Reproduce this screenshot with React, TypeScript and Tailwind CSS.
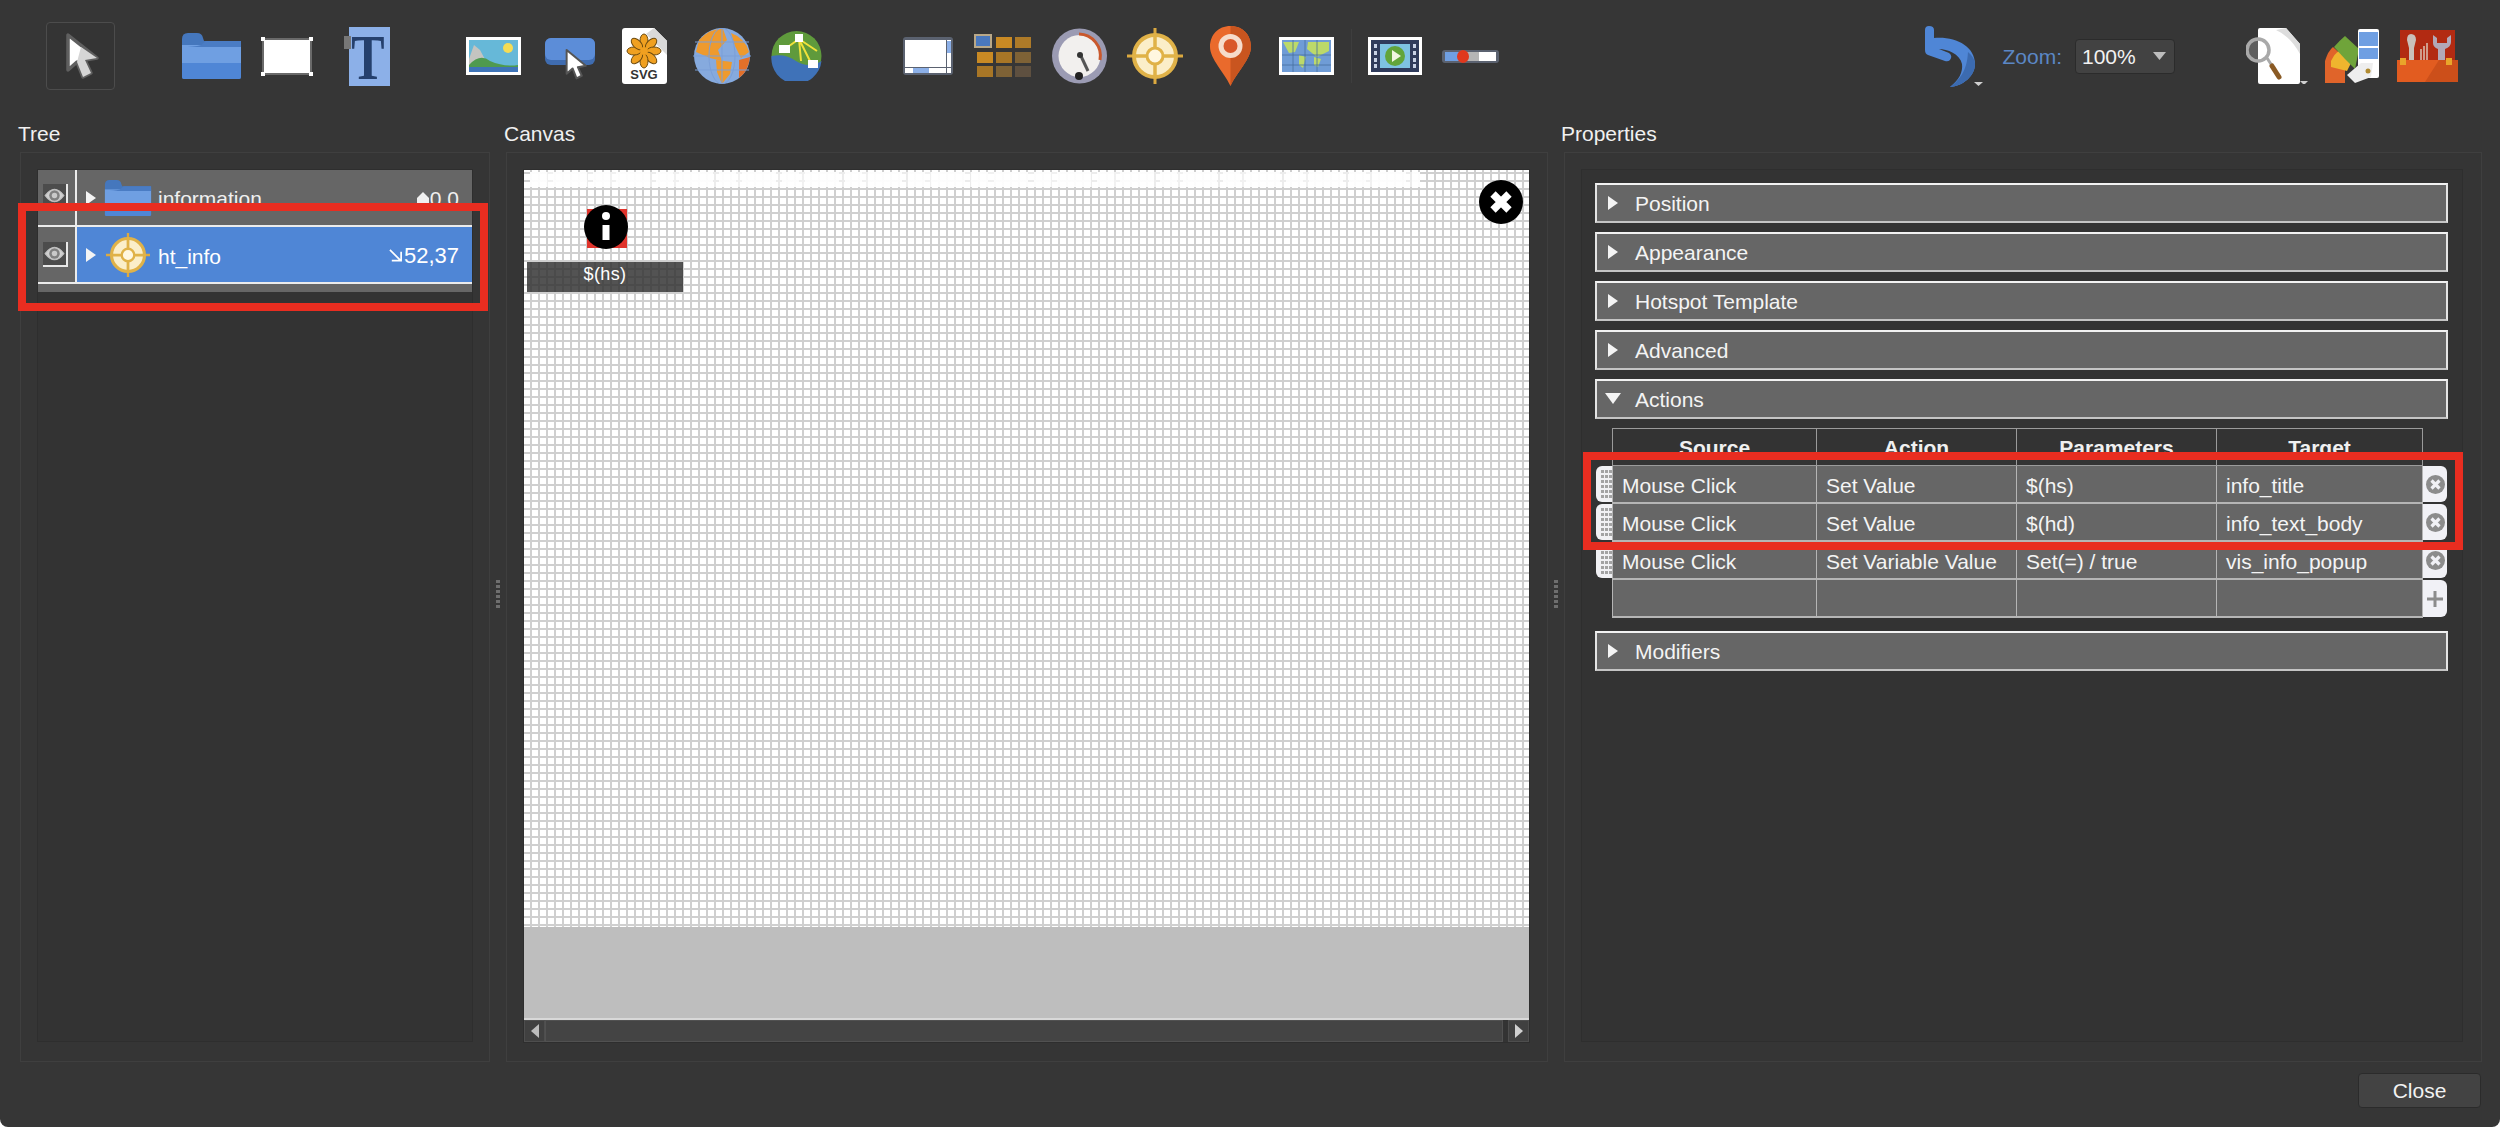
import React from "react";

const Cursor = ({ x = 0, y = 0, s = 1 }: { x?: number; y?: number; s?: number }) => (
  <g transform={`translate(${x} ${y}) scale(${s})`}>
    <path d="M21 12 L21 47 L30 39 L36 54 L44 50 L38 37 L50 35 Z" fill="#fff" stroke="#5f5f5f" strokeWidth="3.5" strokeLinejoin="round" />
    <path d="M34 24 L50 35 L38 37 L44 50 L36 54 L30 39 Z" fill="#d5d5d5" />
  </g>
);

const SelectIcon = () => (
  <svg width="67" height="66" viewBox="0 0 67 66"><Cursor /></svg>
);

const FolderIcon = ({ w = 59, h = 46 }: { w?: number; h?: number }) => (
  <svg width={w} height={h} viewBox="0 0 59 46">
    <path d="M0 6 Q0 0 6 0 L15 0 Q20 0 21 5 L22 8 L59 8 L59 44 Q59 46 57 46 L2 46 Q0 46 0 44 Z" fill="#4577bd" />
    <rect x="0" y="12" width="59" height="20" fill="#6f9fe2" />
    <path d="M0 14 Q12 14 19 12 L24 8 L59 8 L59 14 Z" fill="#4a7cc4" />
    <path d="M0 30 L59 30 L59 44 Q59 46 57 46 L2 46 Q0 46 0 44 Z" fill="#4f86d6" />
  </svg>
);

const RectIcon = () => (
  <svg width="52" height="39" viewBox="0 0 52 39">
    <rect x="2" y="2" width="48" height="35" fill="#fff" stroke="#6a6a6a" strokeWidth="2" rx="2" />
    {[[2, 2], [50, 2], [2, 37], [50, 37]].map(([x, y]) => (
      <rect key={`${x}-${y}`} x={x - 2} y={y - 2} width="4" height="4" fill="#fff" />
    ))}
  </svg>
);

const TextIcon = () => (
  <svg className="overflow-visible" width="46" height="59" viewBox="0 0 46 59">
    <rect x="5" y="0" width="41" height="59" fill="#8cb0e8" />
    <rect x="0" y="9" width="7" height="13" fill="#777" />
    <text transform="translate(24 52) scale(0.78 1)" textAnchor="middle" fontFamily="'Liberation Serif', serif" fontWeight="700" fontSize="64" fill="#25406d">T</text>
  </svg>
);

const ImageIcon = () => (
  <svg width="55" height="38" viewBox="0 0 55 38">
    <rect width="55" height="38" fill="#fff" />
    <rect x="3" y="3" width="49" height="32" fill="#66b8d8" />
    <circle cx="42" cy="11" r="5" fill="#f5dc55" />
    <path d="M3 22 L8 8 L14 13 L22 28 L3 30 Z" fill="#c4c4c0" />
    <path d="M3 28 Q14 16 24 24 Q38 30 52 28 L52 32 L3 32 Z" fill="#4f9a4f" />
    <rect x="3" y="30" width="49" height="5" fill="#3e74b8" />
  </svg>
);

const HoverIcon = () => (
  <svg width="50" height="42" viewBox="0 0 50 42">
    <rect x="0" y="0" width="50" height="27" rx="6" fill="#3f6cb0" />
    <rect x="0" y="0" width="50" height="22" rx="6" fill="#5c8dd8" />
    <g transform="translate(19 12) scale(0.66)"><path d="M4 0 L4 36 L13 28 L19 43 L27 39 L21 26 L33 24 Z" fill="#fff" stroke="#555" strokeWidth="3" strokeLinejoin="round" /></g>
  </svg>
);

const SvgIcon = () => (
  <svg width="45" height="56" viewBox="0 0 45 56">
    <path d="M3 0 L32 0 L45 13 L45 53 Q45 56 42 56 L3 56 Q0 56 0 53 L0 3 Q0 0 3 0 Z" fill="#fff" />
    <path d="M32 0 L45 13 L32 13 Z" fill="#c9c9c9" />
    <path d="M24 6 L45 27 L45 13 L32 0 Z" fill="#d9d9d9" />
    {[0, 45, 90, 135, 180, 225, 270, 315].map((a) => (
      <ellipse key={a} cx="22" cy="13" rx="4" ry="7" fill="#f0a020" stroke="#6b4a10" strokeWidth="1" transform={`rotate(${a} 22 23)`} />
    ))}
    <circle cx="22" cy="23" r="4" fill="#f0a020" />
    <text x="22" y="51" textAnchor="middle" fontFamily="'Liberation Sans', sans-serif" fontWeight="700" fontSize="13" fill="#333">SVG</text>
  </svg>
);

const GlobeIcon = () => (
  <svg width="58" height="56" viewBox="0 0 58 56">
    <circle cx="29" cy="28" r="28" fill="#86aade" />
    <path d="M6 12 Q17 0 30 1 L34 12 L25 22 L29 33 L17 30 L3 24 Z" fill="#ee9a2e" />
    <path d="M23 32 L39 34 L37 46 L29 56 L24 44 Z" fill="#ee9a2e" />
    <path d="M38 5 Q52 10 56 24 L48 30 L42 18 Z" fill="#ee9a2e" />
    <path d="M46 32 L57 29 Q55 44 46 50 Z" fill="#e2702a" />
    <g stroke="#7b9fd8" strokeWidth="1" fill="none">
      <path d="M2 14 H56 M0 28 H58 M2 42 H56" />
      <ellipse cx="29" cy="28" rx="13" ry="28" />
      <path d="M29 0 V56" />
    </g>
  </svg>
);

const NetIcon = () => (
  <svg width="51" height="50" viewBox="0 0 51 50">
    <circle cx="25.5" cy="25" r="25" fill="#5f9a3c" />
    <path d="M0.5 25 Q14 22 25 30 Q38 38 50.5 30 A25 25 0 0 1 0.5 25 Z" fill="#3f72b8" />
    <g stroke="#f0e23a" strokeWidth="2" fill="none"><path d="M14 18 L28 8 L40 32 M28 8 L30 30 M28 8 L46 20" /></g>
    <rect x="8" y="14" width="11" height="8" fill="#fff" />
    <rect x="24" y="3" width="8" height="8" fill="#fff" />
    <rect x="37" y="29" width="10" height="8" fill="#fff" />
  </svg>
);

const ContainerIcon = () => (
  <svg width="50" height="38" viewBox="0 0 50 38">
    <rect width="50" height="38" rx="3" fill="#5b6270" />
    <rect x="2" y="3" width="41" height="27" fill="#fff" />
    <rect x="44" y="3" width="4" height="27" fill="#fff" />
    <rect x="44" y="4" width="4" height="12" fill="#8cb0e8" />
    <rect x="2" y="31" width="41" height="5" fill="#fff" />
    <rect x="10" y="31" width="16" height="5" fill="#8cb0e8" />
    <rect x="44" y="31" width="4" height="5" fill="#fff" />
  </svg>
);

const GridIcon = () => (
  <svg width="58" height="44" viewBox="0 0 58 44">
    <rect x="1" y="1" width="16" height="12" fill="#4a78bd" stroke="#b9a888" strokeWidth="2" />
    <rect x="22" y="3" width="16" height="11" fill="#c98a24" />
    <rect x="41" y="3" width="16" height="11" fill="#ad7a28" />
    <rect x="3" y="18" width="16" height="11" fill="#c98a24" />
    <rect x="22" y="18" width="16" height="11" fill="#a87626" />
    <rect x="41" y="18" width="16" height="11" fill="#7e6236" />
    <rect x="3" y="32" width="16" height="11" fill="#a87626" />
    <rect x="22" y="32" width="16" height="11" fill="#7e6236" />
    <rect x="41" y="32" width="16" height="11" fill="#5e5040" />
  </svg>
);

const GaugeIcon = () => (
  <svg width="55" height="56" viewBox="0 0 55 56">
    <circle cx="27.5" cy="28" r="27.5" fill="#9b9bb3" />
    <circle cx="27.5" cy="28" r="21" fill="#f2f0ee" />
    <path d="M27 6 A22 22 0 0 1 48 32" fill="none" stroke="#c9582c" strokeWidth="3" />
    <path d="M28 26 L36 43" stroke="#555" strokeWidth="3" />
    <circle cx="28" cy="27" r="3" fill="#333" />
    <circle cx="27" cy="48" r="4" fill="#222" />
  </svg>
);

const CrossIcon = ({ w = 56, h = 56 }: { w?: number; h?: number }) => (
  <svg width={w} height={h} viewBox="0 0 56 56">
    <path d="M28 0 V56 M0 28 H56" stroke="#dca93f" strokeWidth="3" />
    <circle cx="28" cy="28" r="21" fill="#fbeec9" stroke="#e0b248" strokeWidth="4" />
    <path d="M28 7 V49 M7 28 H49" stroke="#e0b248" strokeWidth="3.5" />
    <circle cx="28" cy="28" r="8" fill="#fff7e0" stroke="#e0b248" strokeWidth="3" />
  </svg>
);

const PinIcon = () => (
  <svg width="41" height="60" viewBox="0 0 41 60">
    <path d="M20.5 0 C8 0 0 9 0 21 C0 33 14 46 20.5 60 C27 46 41 33 41 21 C41 9 33 0 20.5 0 Z" fill="#ea6a2c" />
    <path d="M20.5 0 C33 0 41 9 41 21 C41 33 27 46 20.5 60 Z" fill="#c9551f" />
    <circle cx="20.5" cy="20" r="12" fill="#f6dccb" />
    <circle cx="20.5" cy="20" r="7" fill="#d9582a" />
  </svg>
);

const MapIcon = () => (
  <svg width="55" height="38" viewBox="0 0 55 38">
    <rect width="55" height="38" fill="#fff" />
    <rect x="3" y="3" width="49" height="32" fill="#6f9cd6" />
    <path d="M4 5 L20 5 L16 15 L10 16 Z M29 5 L50 5 L50 14 L38 20 L28 12 Z M20 18 L27 20 L24 31 L20 28 Z M35 20 L42 22 L39 30 L35 28 Z" fill="#bcd96a" />
    <g stroke="#46709f" strokeWidth="0.8"><path d="M14 3 V35 M26 3 V35 M38 3 V35 M3 18 H52 M3 28 H52" /></g>
  </svg>
);

const VideoIcon = () => (
  <svg width="54" height="38" viewBox="0 0 54 38">
    <rect width="54" height="38" fill="#fff" />
    <rect x="3" y="3" width="48" height="32" fill="#2f3b5c" />
    <rect x="12" y="7" width="30" height="24" fill="#7ec3e2" />
    {[7, 14, 21, 27].map((y) => (
      <g key={y}>
        <rect x="6" y={y} width="3" height="4" fill="#c8d2e6" />
        <rect x="45" y={y} width="3" height="4" fill="#c8d2e6" />
      </g>
    ))}
    <circle cx="27" cy="19" r="10" fill="#62a53a" />
    <path d="M24 13 L33 19 L24 25 Z" fill="#f0f6e0" />
  </svg>
);

const SliderIcon = () => (
  <svg width="57" height="13" viewBox="0 0 57 13">
    <rect width="57" height="13" rx="3" fill="#5b6270" />
    <rect x="3" y="2" width="14" height="9" fill="#6f9fe2" />
    <rect x="17" y="2" width="20" height="9" fill="#b5b5b5" />
    <rect x="37" y="2" width="17" height="9" fill="#fff" />
    <ellipse cx="21" cy="6.5" rx="6" ry="6.5" fill="#e0381d" />
  </svg>
);

const UndoIcon = () => (
  <svg width="58" height="61" viewBox="0 0 58 61">
    <path d="M4 0 Q9 0 9 4 L9 12 C30 10 50 20 50 38 C50 50 38 60 25 61 C34 54 38 46 37 38 C35 28 22 23 14 23 L24 27 Q28 30 25 34 Q23 36 20 35 L3 29 Q0 28 0 24 L0 4 Q0 0 4 0 Z" fill="#4f86d6" />
    <path d="M50 38 C50 50 38 60 25 61 C34 54 42 46 43 26 Q50 32 50 38 Z" fill="#3c6bb0" />
    <path d="M49 56 L58 56 L53.5 60 Z" fill="#cfcfcf" />
  </svg>
);

const DocSearchIcon = () => (
  <svg width="62" height="56" viewBox="0 0 62 56">
    <path d="M12 2 Q12 0 14 0 L40 0 L54 16 L54 54 Q54 56 52 56 L14 56 Q12 56 12 54 Z" fill="#fff" />
    <path d="M30 2 L40 0 L54 16 L54 26 Q44 8 30 2 Z" fill="#dddddd" />
    <circle cx="12" cy="22" r="11" fill="#ffffff" fillOpacity="0.2" stroke="#a9a9a9" strokeWidth="3.5" />
    <path d="M21 30 L34 50" stroke="#a9a9a9" strokeWidth="3" />
    <path d="M26 38 L33 49" stroke="#8a5a24" strokeWidth="5" strokeLinecap="round" />
    <path d="M54 53 L62 53 L58 57 Z" fill="#cfcfcf" />
  </svg>
);

const PaletteIcon = () => (
  <svg width="54" height="54" viewBox="0 0 54 54">
    <path d="M0 54 L0 32 Q3 22 8 18 L20 29 L20 54 Z" fill="#e0642a" />
    <path d="M6 32 Q10 24 14 22 L26 34 L22 42 L6 38 Z" fill="#efb52e" />
    <path d="M9 18 Q14 12 20 7 L34 20 L30 40 L20 30 Z" fill="#6fa43a" />
    <rect x="33" y="0" width="21" height="49" rx="2" fill="#fff" />
    <rect x="34" y="3" width="19" height="14" fill="#6f9fe2" />
    <rect x="34" y="19" width="19" height="11" fill="#6f9fe2" />
    <path d="M22 46 L36 34 L48 34 L46 48 L30 54 Z" fill="#eeeeee" />
    <circle cx="43" cy="42" r="2.5" fill="#b08a30" />
  </svg>
);

const ToolboxIcon = () => (
  <svg width="61" height="52" viewBox="0 0 61 52">
    <rect x="3" y="0" width="55" height="40" fill="#b22a12" />
    <path d="M14 4 Q10 4 10 10 L12 18 L12 30 L17 30 L17 18 L19 10 Q19 4 14 4 Z" fill="#c9c0bb" />
    <path d="M24 32 V19 M27 32 V16 M30 32 V13" stroke="#d8b9a8" strokeWidth="1.6" />
    <path d="M36 5 L36 13 Q36 17 41 19 L41 30 L48 30 L48 19 Q54 17 54 12 L54 5 L50 8 L50 13 L40 13 L40 8 Z" fill="#b2a9b8" />
    <rect x="0" y="30" width="61" height="22" fill="#e25c20" />
    <path d="M28 52 L42 30 L61 30 L61 52 Z" fill="#cc4f1a" />
    <rect x="3" y="28" width="6" height="7" fill="#e9a52a" />
    <rect x="49" y="28" width="6" height="7" fill="#e9a52a" />
  </svg>
);

const Eye = () => (
  <div className="flex h-[25px] w-[25px] items-center justify-center border-b-2 border-r-2 border-b-[#e8e8e8] border-r-[#e8e8e8] bg-[#4c4c4c]">
    <svg width="21" height="19" viewBox="0 0 20 18">
      <path d="M1 9 Q10 -3 19 9 Q10 21 1 9 Z" fill="#d0d0d0" stroke="#c0c0c0" strokeWidth="1" />
      <circle cx="10" cy="9" r="5" fill="#808080" />
      <circle cx="10" cy="9" r="2.6" fill="#c9c9c9" />
    </svg>
  </div>
);

const Tri = ({ down = false }: { down?: boolean }) => (
  <svg width="16" height="14" viewBox="0 0 16 14">
    {down ? <path d="M0 1 L16 1 L8 12 Z" fill="#f4f4f4" /> : <path d="M3 0 L13 7 L3 14 Z" fill="#f4f4f4" />}
  </svg>
);

const Bar = ({ label, down = false, cls }: { label: string; down?: boolean; cls: string }) => (
  <div className={`flex h-[40px] items-center border-2 border-x-[#e4e4e4] border-t-[#f2f2f2] border-b-[#c4c4c4] bg-[#666666] pl-[8px] ${cls}`}>
    <Tri down={down} />
    <span className="ml-[14px] pt-[1px] text-[#f4f4f4]">{label}</span>
  </div>
);

const Grip = () => (
  <div className="flex h-[36px] w-[16px] items-center justify-end rounded-l-[6px] bg-[#f1f1f4]">
    <svg width="11" height="28" viewBox="0 0 11 28">
      {[0, 1, 2, 3, 4, 5].map((r) => (
        <g key={r} fill="#a3a3a3">
          <rect x="0" y={r * 5} width="3" height="3" />
          <rect x="4" y={r * 5} width="3" height="3" />
          <rect x="8" y={r * 5} width="3" height="3" />
        </g>
      ))}
    </svg>
  </div>
);

const Remove = () => (
  <div className="flex h-[36px] w-[24px] items-center justify-center rounded-r-[6px] bg-[#f1f1f6]">
    <svg width="19" height="19" viewBox="0 0 19 19">
      <circle cx="9.5" cy="9.5" r="9.5" fill="#8c8c8c" />
      <path d="M5.5 5.5 L13.5 13.5 M13.5 5.5 L5.5 13.5" stroke="#f1f1f6" strokeWidth="3.2" />
    </svg>
  </div>
);

const Add = () => (
  <div className="flex h-[37px] w-[24px] items-center justify-center rounded-r-[6px] bg-[#f1f1f6]">
    <svg width="18" height="18" viewBox="0 0 18 18">
      <path d="M9 1 V17 M1 9 H17" stroke="#8c8c8c" strokeWidth="3" />
    </svg>
  </div>
);

const Cell = ({ children, cls }: { children?: React.ReactNode; cls: string }) => (
  <div className={`flex h-full items-center border-b-2 border-r border-[#b5b5b5] bg-[#666666] pl-[9px] pt-[2px] text-[#f4f4f4] ${cls}`}>{children}</div>
);

const rows = [
  ["Mouse Click", "Set Value", "$(hs)", "info_title"],
  ["Mouse Click", "Set Value", "$(hd)", "info_text_body"],
  ["Mouse Click", "Set Variable Value", "Set(=) / true", "vis_info_popup"],
];

const Splitter = () => (
  <div className="flex w-[16px] items-center justify-center pt-[14px]">
    <div className="h-[28px] w-[4px] bg-[repeating-linear-gradient(180deg,#6e6e6e_0_3px,transparent_3px_5px)]" />
  </div>
);

export default function App() {
  return (
    <div className="relative flex h-[1127px] w-[2500px] flex-col overflow-hidden rounded-b-[8px] bg-[#363636] font-['Liberation_Sans',Arial,sans-serif] text-[21px] leading-none text-[#f0f0f0]">
      <div className="flex h-[112px] shrink-0 items-center justify-between pr-[42px]">
        <div className="flex items-center">
          <div className="ml-[46px] h-[68px] w-[69px] rounded-[4px] border border-[#4c4c4c] bg-[#343434]">
            <SelectIcon />
          </div>
          <div className="ml-[67px]"><FolderIcon /></div>
          <div className="ml-[20px]"><RectIcon /></div>
          <div className="ml-[31px]"><TextIcon /></div>
          <div className="ml-[76px]"><ImageIcon /></div>
          <div className="ml-[24px] mt-[6px]"><HoverIcon /></div>
          <div className="ml-[27px]"><SvgIcon /></div>
          <div className="ml-[26px]"><GlobeIcon /></div>
          <div className="ml-[20px]"><NetIcon /></div>
          <div className="ml-[81px]"><ContainerIcon /></div>
          <div className="ml-[21px]"><GridIcon /></div>
          <div className="ml-[20px]"><GaugeIcon /></div>
          <div className="ml-[20px]"><CrossIcon /></div>
          <div className="ml-[27px]"><PinIcon /></div>
          <div className="ml-[28px]"><MapIcon /></div>
          <div className="ml-[17px] h-[54px] w-px bg-[#3e3e3e]" />
          <div className="ml-[16px]"><VideoIcon /></div>
          <div className="ml-[20px]"><SliderIcon /></div>
        </div>
        <div className="flex items-center">
          <UndoIcon />
          <span className="ml-[19px] text-[#5b87c5]">Zoom:</span>
          <div className="ml-[13px] flex h-[35px] w-[100px] items-center justify-between rounded-[4px] border border-[#2b2b2b] bg-[#424242] pl-[6px] pr-[8px]">
            <span className="text-[#f2f2f2]">100%</span>
            <svg width="13" height="8" viewBox="0 0 13 8"><path d="M0 0 L13 0 L6.5 8 Z" fill="#bdbdbd" /></svg>
          </div>
          <div className="ml-[71px]"><DocSearchIcon /></div>
          <div className="ml-[17px]"><PaletteIcon /></div>
          <div className="ml-[18px]"><ToolboxIcon /></div>
        </div>
      </div>

      <div className="flex h-[950px] shrink-0 pl-[20px]">
        <div className="flex w-[470px] flex-col">
          <div className="-ml-[2px] flex h-[40px] items-center pt-[3px]">Tree</div>
          <div className="h-[910px] border border-[#3f3f3f] bg-[#353535] pb-[19px] pl-[16px] pr-[16px] pt-[16px]">
            <div className="h-full border border-[#2e2e2e] bg-[#333333]">
              <div className="flex h-[57px] border-b-2 border-b-[#ececec] bg-[#666666]">
                <div className="flex w-[39px] items-center justify-center border-r-2 border-r-[#ececec] pb-[2px] pr-[2px]"><Eye /></div>
                <div className="flex flex-1 items-center pl-[6px] pr-[13px]">
                  <Tri />
                  <div className="ml-[5px]"><FolderIcon w={48} h={36} /></div>
                  <span className="ml-[6px] flex-1 pt-[1px]">information</span>
                  <svg width="12" height="12" viewBox="0 0 12 12"><path d="M6 0 L12 6 L12 12 L0 12 L0 6 Z" fill="#f0f0f0" /></svg>
                  <span className="ml-[1px] pt-[1px]">0,0</span>
                </div>
              </div>
              <div className="flex h-[57px] border-b-2 border-b-[#ececec] bg-[#666666]">
                <div className="flex w-[39px] items-center justify-center border-r-2 border-r-[#ececec] pr-[2px]"><Eye /></div>
                <div className="flex flex-1 items-center bg-[#4f86d6] pl-[6px] pr-[13px]">
                  <Tri />
                  <div className="ml-[5px] flex w-[48px] justify-center"><CrossIcon w={44} h={44} /></div>
                  <span className="ml-[6px] mt-[3px] flex-1 text-white">ht_info</span>
                  <svg width="14" height="14" viewBox="0 0 15 15"><path d="M1 2 L12 13 M13 4 V13.5 H3" fill="none" stroke="#fff" strokeWidth="1.8" /></svg>
                  <span className="ml-[1px] mt-[3px] text-[22px] text-white">52,37</span>
                </div>
              </div>
              <div className="h-[8px] bg-[#666666]" />
            </div>
          </div>
        </div>

        <Splitter />

        <div className="flex w-[1042px] flex-col">
          <div className="-ml-[2px] flex h-[40px] items-center pt-[3px]">Canvas</div>
          <div className="h-[910px] border border-[#3f3f3f] bg-[#353535] pb-[18px] pl-[16px] pr-[17px] pt-[16px]">
            <div className="flex h-full flex-col border border-[#2e2e2e]">
              <div className="relative h-[757px] bg-white bg-[linear-gradient(#cfcfcf_2px,transparent_2px),linear-gradient(90deg,#cfcfcf_2px,transparent_2px)] bg-[size:8px_8px] bg-[position:6px_2px]">
                <div className="absolute left-[6px] top-[2px] h-[15px] w-[890px] bg-[repeating-linear-gradient(90deg,rgba(255,255,255,0.95)_0_17px,rgba(255,255,255,0.7)_17px_23px,rgba(255,255,255,0.95)_23px_57px,rgba(255,255,255,0.6)_57px_63px)]" />
                <div className="absolute left-[63px] top-[39px] h-[39px] w-[40px] bg-[#e0342c]" />
                <svg className="absolute left-[60px] top-[35px]" width="44" height="44" viewBox="0 0 44 44">
                  <circle cx="22" cy="22" r="22" fill="#000" />
                  <circle cx="22" cy="11" r="4" fill="#fff" />
                  <rect x="18.5" y="20" width="7" height="15" fill="#fff" />
                </svg>
                <div className="absolute left-[3px] top-[92px] flex h-[30px] w-[156px] justify-center bg-[rgba(45,45,45,0.82)] pt-[2px] text-[18px] leading-[20px] tracking-[0.4px] text-white">$(hs)</div>
                <svg className="absolute left-[955px] top-[10px]" width="44" height="44" viewBox="0 0 44 44">
                  <circle cx="22" cy="22" r="22" fill="#000" />
                  <path d="M14 14 L30 30 M30 14 L14 30" stroke="#fff" strokeWidth="7.5" />
                </svg>
              </div>
              <div className="h-[91px] bg-[#bebebe]" />
              <div className="h-[2px] bg-[#d8d8d8]" />
              <div className="flex h-[22px] justify-between bg-[#333333]">
                <div className="flex w-[21px] items-center justify-center border border-[#4e4e4e] bg-[#404040]">
                  <svg width="8" height="14" viewBox="0 0 8 14"><path d="M8 0 L0 7 L8 14 Z" fill="#bdbdbd" /></svg>
                </div>
                <div className="flex-1 border border-[#515151] bg-[#444444]" />
                <div className="ml-[5px] flex w-[21px] items-center justify-center border border-[#4e4e4e] bg-[#404040]">
                  <svg width="8" height="14" viewBox="0 0 8 14"><path d="M0 0 L8 7 L0 14 Z" fill="#d0d0d0" /></svg>
                </div>
              </div>
            </div>
          </div>
        </div>

        <Splitter />

        <div className="flex w-[918px] flex-col">
          <div className="-ml-[3px] flex h-[40px] items-center pt-[3px]">Properties</div>
          <div className="h-[910px] border border-[#3f3f3f] bg-[#353535] pb-[19px] pl-[16px] pr-[18px] pt-[16px]">
            <div className="h-full border border-[#2e2e2e] bg-[#333333] pl-[13px] pr-[14px] pt-[13px]">
              <Bar label="Position" cls="mb-[9px]" />
              <Bar label="Appearance" cls="mb-[9px]" />
              <Bar label="Hotspot Template" cls="mb-[9px]" />
              <Bar label="Advanced" cls="mb-[9px]" />
              <Bar label="Actions" down cls="mb-[9px]" />

              <div className="ml-[1px] flex h-[38px]">
                <div className="w-[16px]" />
                {["Source", "Action", "Parameters", "Target"].map((h, i) => (
                  <div
                    key={h}
                    className={
                      i === 0
                        ? "flex w-[205px] items-center justify-center border border-[#9a9a9a] font-bold"
                        : i === 3
                          ? "flex w-[206px] items-center justify-center border-y border-r border-[#9a9a9a] font-bold"
                          : "flex w-[200px] items-center justify-center border-y border-r border-[#9a9a9a] font-bold"
                    }
                  >
                    {h}
                  </div>
                ))}
              </div>

              {rows.map((r, i) => (
                <div key={i} className="ml-[1px] flex h-[38px]">
                  <Grip />
                  <Cell cls="w-[205px] border-l">{r[0]}</Cell>
                  <Cell cls="w-[200px]">{r[1]}</Cell>
                  <Cell cls="w-[200px]">{r[2]}</Cell>
                  <Cell cls="w-[206px]">{r[3]}</Cell>
                  <Remove />
                </div>
              ))}
              <div className="ml-[1px] flex h-[38px]">
                <div className="w-[16px]" />
                <Cell cls="w-[205px] border-l" />
                <Cell cls="w-[200px]" />
                <Cell cls="w-[200px]" />
                <Cell cls="w-[206px]" />
                <Add />
              </div>

              <Bar label="Modifiers" cls="mt-[13px]" />
            </div>
          </div>
        </div>
      </div>

      <div className="flex flex-1 items-start justify-end pr-[19px] pt-[11px]">
        <div className="flex h-[35px] w-[123px] items-center justify-center rounded-[4px] border border-[#2b2b2b] bg-[#434343] text-[#f2f2f2]">Close</div>
      </div>

      <div className="absolute left-[18px] top-[203px] h-[108px] w-[470px] border-[8px] border-[#e92d20]" />
      <div className="absolute left-[1583px] top-[452px] h-[98px] w-[880px] border-[8px] border-[#e92d20]" />
    </div>
  );
}
